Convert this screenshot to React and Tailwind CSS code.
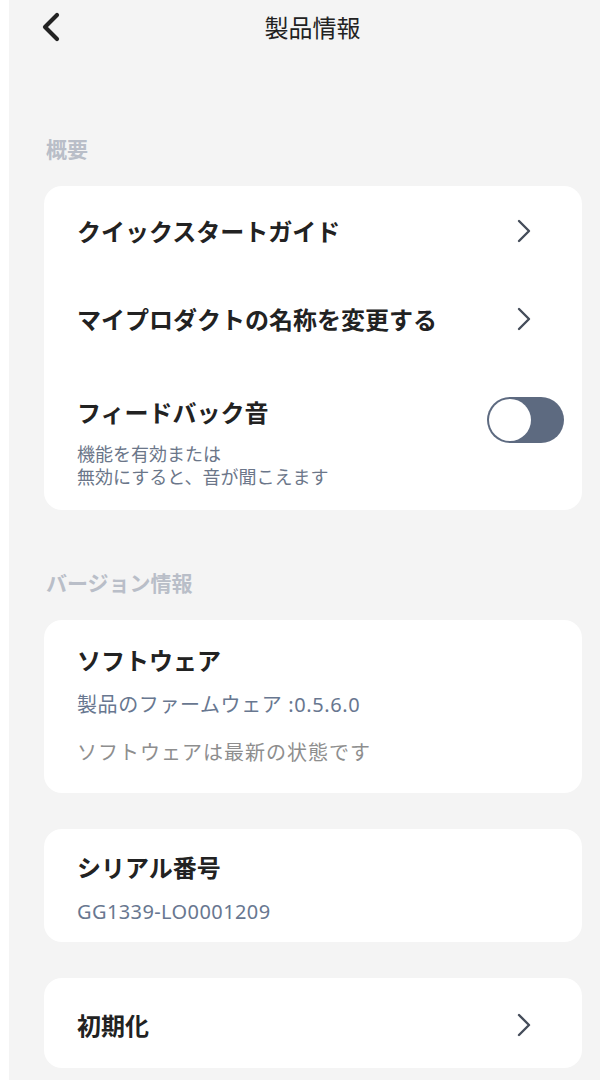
const FONT = { fontFamily: '"Noto Sans CJK JP", "Noto Sans", sans-serif' }
const LATIN = { fontFamily: '"Noto Sans", "Noto Sans CJK JP", sans-serif' }

function Chevron() {
  return (
    <svg width="14" height="24" viewBox="0 0 14 24" className="mr-[51px] shrink-0">
      <polyline points="2,2 12,12 2,22" fill="none" stroke="#454d5a" strokeWidth="2.4" strokeLinecap="round" strokeLinejoin="round" />
    </svg>
  )
}

function LinkRow({ label, height }) {
  return (
    <div className={`flex items-center justify-between pl-[33px] ${height}`}>
      <span className="text-[24px] leading-[32px] font-bold text-[#222222]">{label}</span>
      <Chevron />
    </div>
  )
}

function SectionLabel({ children, className }) {
  return (
    <div className={`pl-[2px] text-[21px] leading-[28px] font-bold text-[#b9bec8] ${className}`}>
      {children}
    </div>
  )
}

export default function App() {
  return (
    <div className="min-h-screen bg-white" style={FONT}>
      <div className="ml-[9px] mr-[8px] min-h-[1080px] bg-[#f4f4f4] pl-[35px] pr-[18px] pb-[12px]">

        <div className="flex items-center h-[54px] -ml-[3px]">
          <svg width="20" height="30" viewBox="0 0 20 30" className="shrink-0">
            <polyline points="16,3 4,15 16,27" fill="none" stroke="#222222" strokeWidth="4.2" strokeLinecap="round" strokeLinejoin="round" />
          </svg>
          <h1 className="flex-1 text-center pr-[18px] text-[24px] leading-[32px] font-normal text-[#222222]">製品情報</h1>
        </div>

        <SectionLabel className="mt-[80px] mb-[24px]">概要</SectionLabel>

        <div className="bg-white rounded-[18px]">
          <LinkRow label="クイックスタートガイド" height="h-[94px] pb-[4px]" />
          <LinkRow label="マイプロダクトの名称を変更する" height="h-[80px] pb-[2px]" />
          <div className="flex items-start justify-between pl-[33px] pr-[18px] pt-[36px] pb-[22px]">
            <div>
              <div className="text-[24px] leading-[32px] font-bold text-[#222222]">フィードバック音</div>
              <div className="mt-[14px] text-[18px] leading-[23px] text-[#6b7689]">
                <div>機能を有効または</div>
                <div>無効にすると、音が聞こえます</div>
              </div>
            </div>
            <div className="mt-[1px] w-[77px] h-[46px] rounded-full bg-[#5d6a80] p-[2px] flex items-center">
              <div className="w-[42px] h-[42px] rounded-full bg-white" />
            </div>
          </div>
        </div>

        <SectionLabel className="mt-[58px] mb-[24px]">バージョン情報</SectionLabel>

        <div className="bg-white rounded-[18px] pl-[33px] pt-[24px] pb-[27px]">
          <div className="text-[24px] leading-[32px] font-bold text-[#222222]">ソフトウェア</div>
          <div className="mt-[15px] text-[20px] leading-[28px] tracking-[0.6px] text-[#687790]" style={LATIN}>製品のファームウェア :0.5.6.0</div>
          <div className="mt-[19px] text-[20px] leading-[28px] tracking-[1px] text-[#8e8e8e]">ソフトウェアは最新の状態です</div>
        </div>

        <div className="mt-[36px] bg-white rounded-[18px] pl-[33px] pt-[22px] pb-[16px]">
          <div className="text-[24px] leading-[32px] font-bold text-[#222222]">シリアル番号</div>
          <div className="mt-[15px] text-[20px] leading-[28px] tracking-[0.4px] text-[#687790]" style={LATIN}>GG1339-LO0001209</div>
        </div>

        <div className="mt-[36px] bg-white rounded-[18px]">
          <LinkRow label="初期化" height="h-[90px] pt-[4px]" />
        </div>
      </div>
    </div>
  )
}
